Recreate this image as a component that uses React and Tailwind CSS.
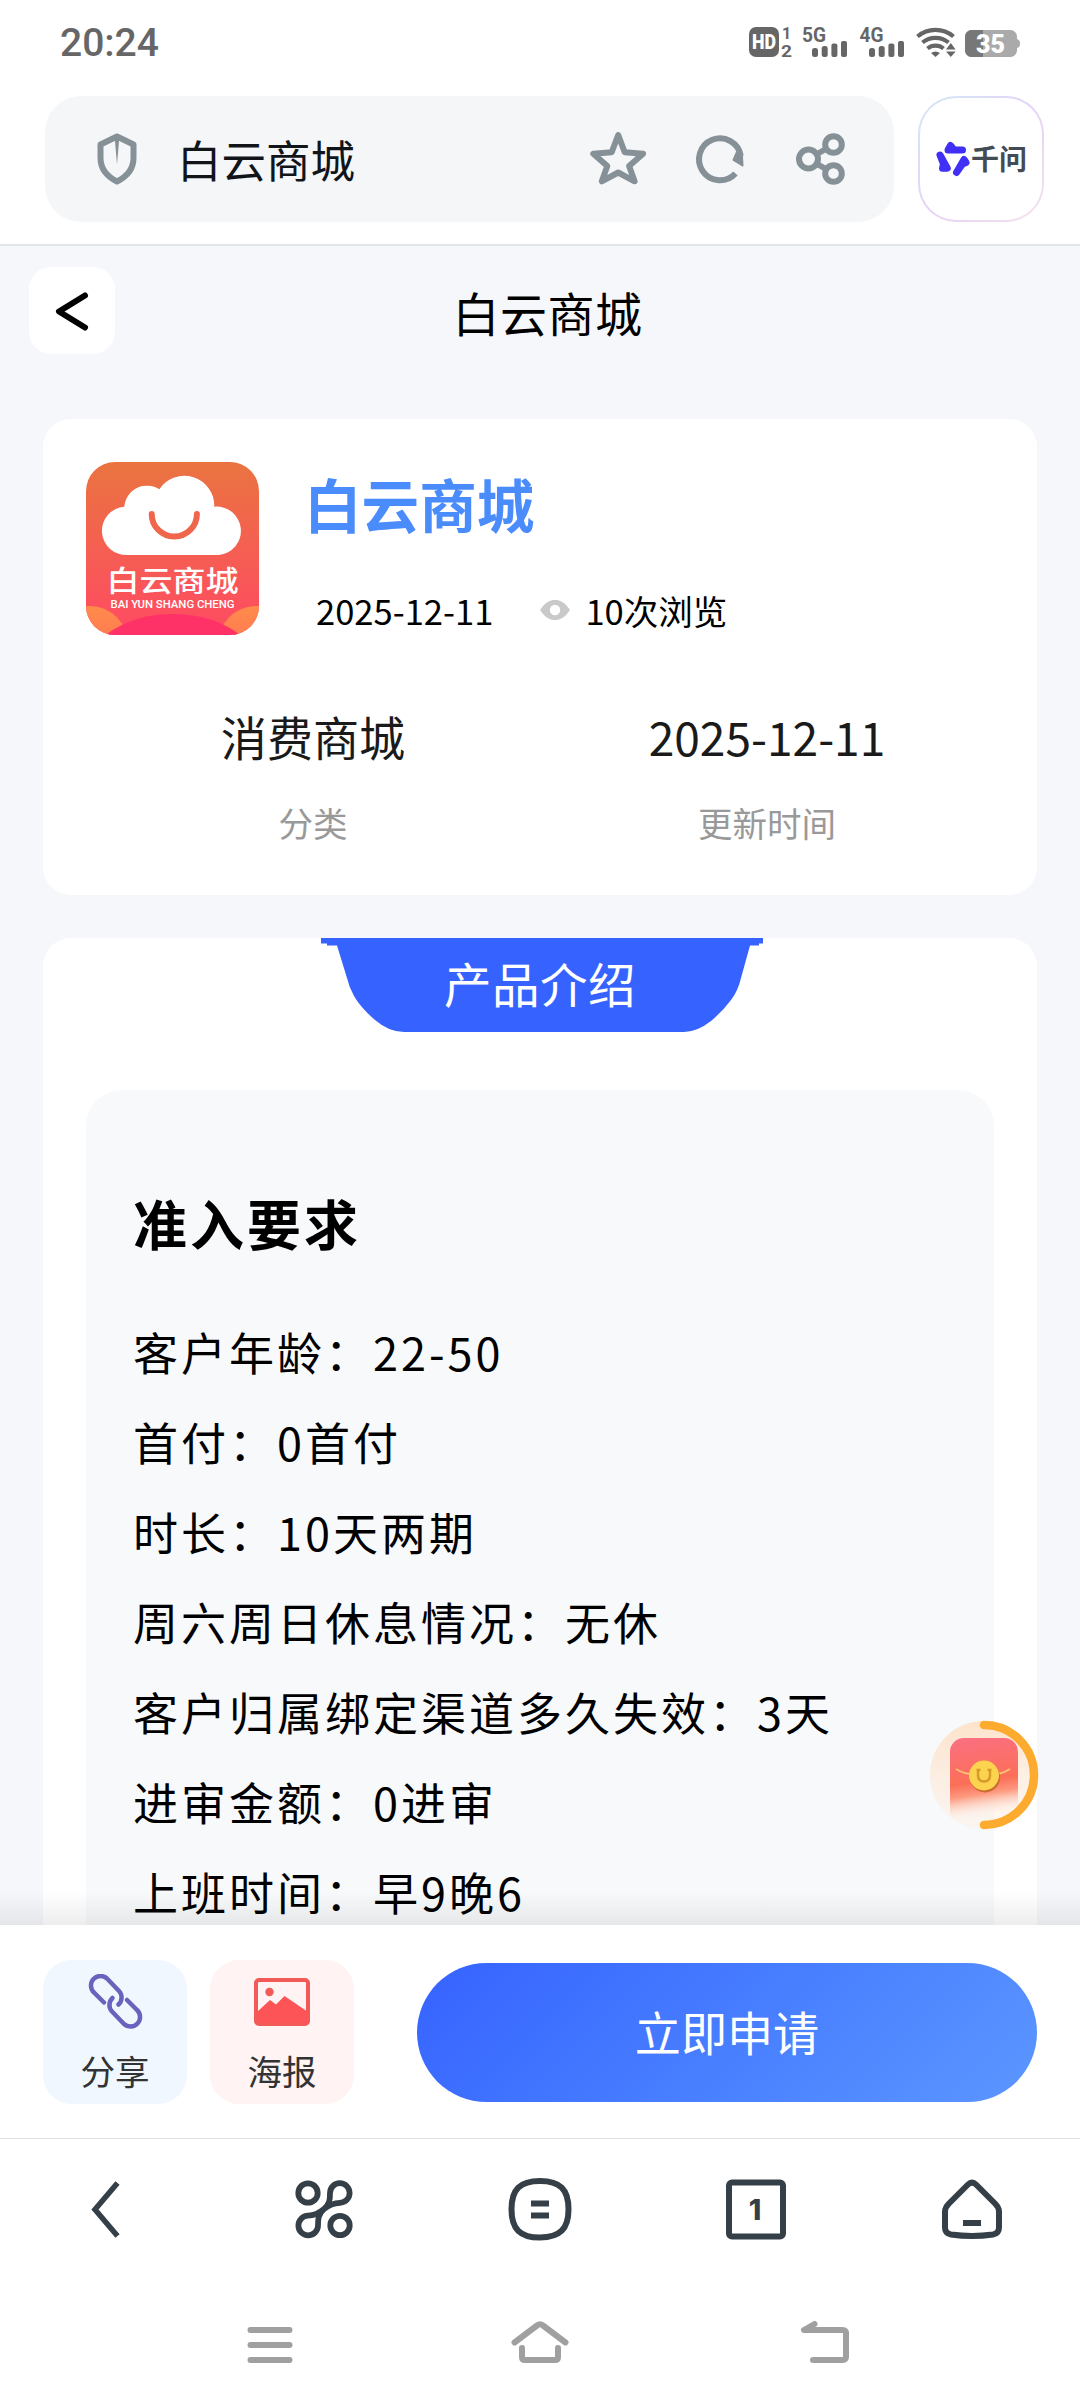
const requirements = [
  "客户年龄：22-50",
  "首付：0首付",
  "时长：10天两期",
  "周六周日休息情况：无休",
  "客户归属绑定渠道多久失效：3天",
  "进审金额：0进审",
  "上班时间：早9晚6",
]

export default function App() {
  return (
    <div className="w-[1080px] h-[2408px] overflow-hidden flex flex-col bg-white text-black font-['Noto_Sans_CJK_SC',sans-serif]">
      <StatusBar />
      <AddressBar />

      {/* PAGE */}
      <main className="relative h-[1679px] overflow-hidden bg-[#f5f7fb] px-[43px]">
        <PageHeader />
        <SummaryCard />
        <DetailCard />
        <div className="absolute left-0 bottom-0 w-full h-[34px] bg-gradient-to-b from-transparent to-black/7" />
        <RedPacket />
      </main>

      <ActionBar />
      <BrowserNav />
      <SystemNav />
    </div>
  )
}

function StatusBar() {
  return (
    <div className="h-[96px] pl-[60px] pr-[61px] pt-[19px] flex justify-between text-[#666]">
      <span className="mt-[1px] font-[Roboto] font-medium text-[39px] leading-[46px]">20:24</span>
      <svg width="272" height="40" viewBox="748 24 272 40" className="mt-[5px] overflow-visible" fill="#666">
        <rect x="750" y="27" width="30" height="30" rx="7" />
        <text x="765" y="49" textAnchor="middle" textLength="24" lengthAdjust="spacingAndGlyphs" fontFamily="Roboto" fontWeight="900" fontSize="20" fill="#fff">HD</text>
        <text x="783" y="39" fontFamily="Roboto" fontWeight="700" fontSize="16">1</text>
        <text x="782" y="56.5" fontFamily="Roboto" fontWeight="700" fontSize="16" textLength="11" lengthAdjust="spacingAndGlyphs">2</text>
        <text x="803" y="42" fontFamily="Roboto" fontWeight="700" fontSize="21" textLength="24" lengthAdjust="spacingAndGlyphs">5G</text>
        <text x="860.5" y="42" fontFamily="Roboto" fontWeight="700" fontSize="21" textLength="24" lengthAdjust="spacingAndGlyphs">4G</text>
        {[813, 870].map((x) => (
          <g key={x}>
            <rect x={x} y="48" width="6" height="9" rx="2.5" />
            <rect x={x + 9.7} y="46" width="6" height="11" rx="2.5" />
            <rect x={x + 19.4} y="43.5" width="6" height="13.5" rx="2" />
            <rect x={x + 29} y="41" width="6" height="16" rx="2" />
          </g>
        ))}
        <g fill="none" stroke="#666" strokeWidth="4.2">
          <path d="M918.5 36.5a28 28 0 0 1 36 0" />
          <path d="M923.5 42.5a20.5 20.5 0 0 1 26 0" />
          <path d="M928.5 48.5a12.5 12.5 0 0 1 16 0" />
        </g>
        <path d="M932 53q4.500-3 9 0l-4.500 4z" />
        <path d="M947 49.500l4.800-6.500 4.800 6.500zM947 51.500h9.600l-4.800 5.500z" />
        <rect x="966" y="30" width="52" height="27" rx="6.500" fill="#aaa" />
        <path d="M972.500 30H984v27h-11.500a6.500 6.500 0 0 1-6.500-6.500v-14a6.500 6.500 0 0 1 6.500-6.500z" fill="#777" />
        <path d="M1017 39q4 0 4 4.500t-4 4.500z" fill="#aaa" />
        <text x="991.500" y="53" textAnchor="middle" fontFamily="Roboto" fontWeight="900" fontSize="25" fill="#fff">35</text>
      </svg>
    </div>
  )
}

function AddressBar() {
  return (
    <div className="h-[150px] shrink-0 pl-[45px] pr-[36px] flex justify-between items-start border-b-2 border-[#e3e6e8]">
      <div className="w-[849px] h-[126px] rounded-[36px] bg-[#f4f6f8] flex items-center">
        <svg width="44" height="56" viewBox="0 0 44 56" className="ml-[50px]">
          <path d="M22 5.500L38.500 13.500V27c0 11.500-6.500 18.500-16.500 23.500C12 45.500 5.500 38.500 5.500 27V13.500z" fill="none" stroke="#869197" strokeWidth="6" strokeLinejoin="round" />
          <path d="M19.800 8h4.400L22 33.500z" fill="#869197" />
        </svg>
        <span className="ml-[38px] text-[44.500px] leading-[60px] text-[#111418] grow">白云商城</span>
        <svg width="256" height="60" viewBox="589 129 256 60" className="mr-[49px]" fill="none" stroke="#869197" strokeWidth="6" strokeLinejoin="round">
          <path d="M618.200 135l6.500 17.200 18.400 1.500-14 12.300 5.500 15.300-16.400-8.800-16.400 8.800 5.500-15.300-14-12.300 18.400-1.500z" />
          <path d="M735.500 173.500A21 21 0 1 1 740.800 156" />
          <path d="M737 152l-3.500 8 9 5.500-.5-9z" fill="#869197" strokeWidth="2" />
          <circle cx="808.500" cy="159" r="9.500" />
          <circle cx="833.500" cy="144.500" r="8.300" />
          <circle cx="833.500" cy="173.500" r="8.300" />
          <path d="M817 154l9-5M817 164l9 5" />
        </svg>
      </div>
      <div className="w-[126px] h-[126px] rounded-[38px] p-[2px] bg-linear-135 from-[#d3e8f8] via-[#e3d2f7] to-[#f5e2ea]">
        <div className="size-full rounded-[36px] bg-white flex items-center pl-[15px]">
          <svg width="36" height="36" viewBox="0 0 36 36" fill="#4030f5" stroke="#4030f5" strokeWidth="7" strokeLinecap="round" strokeLinejoin="round">
            <path d="M13 9l2.500-4.500L19 9h8.500z" />
            <path d="M5 14l7.300 13.300H7.500L8.500 23z" />
            <path d="M29 18.500l2 3-3.500 1.500-6 8.500z" />
          </svg>
          <span className="pb-[2px] text-[28px] leading-[36px] font-bold text-[#434b54] whitespace-nowrap">千问</span>
        </div>
      </div>
    </div>
  )
}

function PageHeader() {
  return (
    <header className="-mx-[14px] h-[173px] pt-[21px] grid grid-cols-[86px_1fr_86px] items-start">
      <button className="w-[86px] h-[87px] rounded-[22px] bg-white flex items-center justify-center">
        <svg width="40" height="44" viewBox="0 0 40 44" fill="none" stroke="#000" strokeWidth="6" strokeLinecap="round" strokeLinejoin="round">
          <path d="M33 6.500L7 22.500l26 16" />
        </svg>
      </button>
      <h1 className="mt-[12px] pl-[15px] text-center text-[47px] tracking-[0.500px] leading-[66px]">白云商城</h1>
    </header>
  )
}

function SummaryCard() {
  return (
    <section className="h-[476px] rounded-[28px] bg-white px-[43px] pt-[43px]">
      <div className="flex">
        <AppLogo />
        <div className="ml-[46px] -mt-[2px]">
          <h2 className="-ml-[1px] text-[57.600px] leading-[86px] font-bold text-[#4a8cfc]">白云商城</h2>
          <div className="ml-[11px] mt-[39px] flex items-center text-[34.560px] leading-[50px]">
            <span>2025-12-11</span>
            <svg width="32" height="22" viewBox="0 0 32 22" className="ml-[46px] mr-[14px]">
              <path d="M1 11C6 3.500 10.500 1 16 1s10 2.500 15 10c-5 7.500-9.500 10-15 10S6 18.500 1 11z" fill="#c9c9c9" />
              <circle cx="16" cy="11" r="5.200" fill="#fff" />
            </svg>
            <span>10次浏览</span>
          </div>
        </div>
      </div>
      <div className="mt-[66px] grid grid-cols-2 text-center">
        <Stat value="消费商城" label="分类" />
        <Stat value="2025-12-11" label="更新时间" />
      </div>
    </section>
  )
}

function Stat({ value, label }) {
  return (
    <div>
      <p className="text-[46.080px] leading-[70px] text-[#1a1a1a]">{value}</p>
      <p className="mt-[25px] text-[34.560px] leading-[52px] text-[#999]">{label}</p>
    </div>
  )
}

function AppLogo() {
  return (
    <svg width="173" height="173" viewBox="0 0 173 173" className="shrink-0">
      <defs>
        <linearGradient id="logoBg" x1="0" y1="0" x2="0" y2="1">
          <stop offset="0" stopColor="#ea7440" />
          <stop offset="1" stopColor="#ff4a63" />
        </linearGradient>
        <linearGradient id="logoHill" x1="0" y1="0" x2="0" y2="1">
          <stop offset="0" stopColor="#ff8a4a" />
          <stop offset="1" stopColor="#ff6a5c" />
        </linearGradient>
        <clipPath id="logoClip">
          <rect width="173" height="173" rx="29" />
        </clipPath>
      </defs>
      <g clipPath="url(#logoClip)">
        <rect width="173" height="173" fill="url(#logoBg)" />
        <circle cx="4" cy="182" r="38" fill="url(#logoHill)" />
        <circle cx="170" cy="182" r="38" fill="url(#logoHill)" />
        <ellipse cx="87" cy="205" rx="84" ry="53" fill="#ff3267" />
      </g>
      <path d="M42 93A24.200 24.200 0 0 1 38.300 44.700A22.700 22.700 0 0 1 73.300 27.300A30 30 0 0 1 128.300 44.700A24.200 24.200 0 0 1 133 93z" fill="#fff" />
      <path d="M65.700 52a22.600 22.600 0 0 0 45.200 0" fill="none" stroke="#f0664d" strokeWidth="6" strokeLinecap="round" />
      <text x="86.500" y="130" textAnchor="middle" textLength="132" lengthAdjust="spacingAndGlyphs" fontSize="29" fontWeight="500" fill="#fff">白云商城</text>
      <text x="86.500" y="145.500" textAnchor="middle" textLength="124" lengthAdjust="spacingAndGlyphs" fontFamily="Roboto" fontSize="10" fontWeight="500" fill="#fff">BAI YUN SHANG CHENG</text>
    </svg>
  )
}

function DetailCard() {
  return (
    <section className="mt-[43px] h-[1100px] rounded-[28px] bg-white px-[43px]">
      <div className="relative ml-[235px] w-[442px] h-[94px]">
        <svg width="442" height="94" viewBox="0 0 442 94" className="absolute inset-0" fill="#3662ff">
          <path d="M0 0h442v5.500h-4v2h-9L420 40q-3 13-10 22-8 11-20 21-14 11-27 11H83q-15 0-29-12-14-12-21-24-5-9-7-18L16 7.500H6v-2H0z" />
        </svg>
        <h3 className="relative pt-[12px] pr-[4px] text-center text-[47.500px] tracking-[0.500px] leading-[66px] text-white">产品介绍</h3>
      </div>
      <div className="mt-[58px] h-[1000px] rounded-[36px] bg-[#f8f9fb] pl-[47px] pt-[93px] tracking-[3px]">
        <h4 className="text-[54px] leading-[80px] font-bold">准入要求</h4>
        <ul className="mt-[44px] text-[45px] leading-[90px] whitespace-nowrap">
          {requirements.map((item) => (
            <li key={item}>{item}</li>
          ))}
        </ul>
      </div>
    </section>
  )
}

function RedPacket() {
  return (
    <svg width="110" height="110" viewBox="0 0 110 110" className="absolute left-[929px] top-[1474px]">
      <defs>
        <linearGradient id="halo" x1="0" y1="0" x2="0" y2="1">
          <stop offset="0" stopColor="#fde3cb" />
          <stop offset="1" stopColor="#fdf0e6" stopOpacity="0.500" />
        </linearGradient>
        <linearGradient id="packet" x1="0" y1="0" x2="0.120" y2="1">
          <stop offset="0" stopColor="#fb6f83" />
          <stop offset="0.550" stopColor="#fb6f58" />
          <stop offset="0.700" stopColor="#fd9a80" />
          <stop offset="0.950" stopColor="#fdeee4" stopOpacity="0" />
        </linearGradient>
      </defs>
      <circle cx="55" cy="55" r="54" fill="url(#halo)" />
      <rect x="21" y="18" width="68" height="86" rx="14" fill="url(#packet)" />
      <path d="M27 49q6 4 14 5M81 49q-6 4-12 5" fill="none" stroke="#fcc070" strokeWidth="2" />
      <circle cx="56" cy="57.500" r="15" fill="#c96a30" />
      <circle cx="55" cy="55.500" r="15" fill="#fcd34f" />
      <path d="M49 50v5q0 6.500 6 6.500t6-6.500v-5M47.500 50h4M58.500 50h4" fill="none" stroke="#d99a2c" strokeWidth="2.500" />
      <path d="M55 5a50 50 0 0 1 0 100" fill="none" stroke="#fdab2f" strokeWidth="8.500" strokeLinecap="round" />
    </svg>
  )
}

function ActionBar() {
  return (
    <div className="h-[214px] shrink-0 px-[43px] pt-[35px] flex items-start bg-white border-b border-[#dddfe1] text-[34.560px] leading-[50px] text-[#333]">
      <button className="size-[144px] rounded-[29px] bg-[#f0f7ff] flex flex-col items-center pt-[14px]">
        <svg width="56" height="56" viewBox="87 1974 56 56" fill="none" stroke="#6b62bd" strokeWidth="4.500" strokeLinecap="round">
          <path d="M104 2002.500L94 1992.500a9.500 9.500 0 0 1 13-14l12 12.500a9.500 9.500 0 0 1-.5 13.500" />
          <path d="M127 2000l10 10a9.500 9.500 0 0 1-13 14l-12-12.500a9.500 9.500 0 0 1 .5-13.500" />
        </svg>
        <span className="mt-[15px]">分享</span>
      </button>
      <button className="ml-[23px] size-[144px] rounded-[29px] bg-[#fff3f3] flex flex-col items-center pt-[18px]">
        <svg width="56" height="48" viewBox="0 0 56 48">
          <rect x="2" y="2" width="52" height="44" rx="3" fill="none" stroke="#f25a58" strokeWidth="4" />
          <circle cx="15.500" cy="14" r="4.200" fill="#f25a58" />
          <path d="M3 34l13-12 6 4.500L30.500 18 54 34v11H3z" fill="#fc5457" />
        </svg>
        <span className="mt-[19px]">海报</span>
      </button>
      <button className="ml-[63px] mt-[3px] pb-[4px] w-[620px] h-[139px] rounded-full bg-linear-135 from-[#3662ff] to-[#5c96ff] text-white text-[46.080px]">
        立即申请
      </button>
    </div>
  )
}

function BrowserNav() {
  return (
    <nav className="h-[142px] shrink-0 grid grid-cols-5 items-center justify-items-center text-[#353f47]">
      <svg width="64" height="64" viewBox="0 0 64 64" fill="none" stroke="currentColor" strokeWidth="5.500">
        <path d="M41.500 5L19 31.500 41.500 58" />
      </svg>
      <svg width="64" height="64" viewBox="0 0 64 64" fill="none" stroke="currentColor" strokeWidth="5.800">
        <circle cx="16" cy="15" r="9.700" />
        <circle cx="48" cy="47.500" r="9.700" />
        <path d="M32 31C38 26 38 21 38 15a9.800 9.800 0 1 1 10 9.800C42 25 38 26 32 31C26 36 26 42 26 47.500a9.800 9.800 0 1 1-10-9.800C22 37.500 26 36 32 31z" />
      </svg>
      <svg width="64" height="64" viewBox="0 0 64 64" fill="none" stroke="currentColor" strokeWidth="6">
        <path d="M32 3C52 3 60.500 11.500 60.500 31.200S52 59.500 32 59.500 3.500 51 3.500 31.200 12 3 32 3z" />
        <path d="M23 25.500h18M23 37.500h18" />
      </svg>
      <svg width="64" height="64" viewBox="0 0 64 64">
        <rect x="5" y="4.500" width="54" height="54" rx="3" fill="none" stroke="currentColor" strokeWidth="6" />
        <text x="31" y="42" textAnchor="middle" fontFamily="Inter" fontWeight="800" fontSize="28.500" fill="currentColor">1</text>
      </svg>
      <svg width="64" height="64" viewBox="0 0 64 64" fill="none" stroke="currentColor" strokeWidth="6">
        <path d="M28 6.500q4-4 8 0l19 19q4 4 4 8v16q0 6-6 7-21 3-42 0-6-1-6-7v-16q0-4 4-8z" />
        <path d="M23 45h18" />
      </svg>
    </nav>
  )
}

function SystemNav() {
  return (
    <div className="h-[127px] shrink-0 flex pl-[238px] pt-[32px]">
      <svg width="64" height="64" viewBox="238 2313 64 64" fill="none" stroke="#a0a0a0" strokeWidth="6" strokeLinecap="round">
        <path d="M250.500 2330h39M250.500 2345h39M250.500 2360h39" />
      </svg>
      <svg width="64" height="64" viewBox="508 2313 64 64" className="ml-[206px]" fill="none" stroke="#a0a0a0" strokeWidth="6" strokeLinecap="round" strokeLinejoin="round">
        <path d="M514.500 2342.500l22.500-17q3-2.500 6 0l22.500 17M522 2348v9q0 3 3 3h30q3 0 3-3v-9" />
      </svg>
      <svg width="64" height="64" viewBox="794 2313 64 64" className="ml-[222px]" fill="none" stroke="#a0a0a0" strokeWidth="6" strokeLinecap="round" strokeLinejoin="round">
        <path d="M814.500 2324L804 2330h38.500q3.500 0 3.500 3.500v23q0 3.500-3.500 3.500H813" />
      </svg>
    </div>
  )
}
